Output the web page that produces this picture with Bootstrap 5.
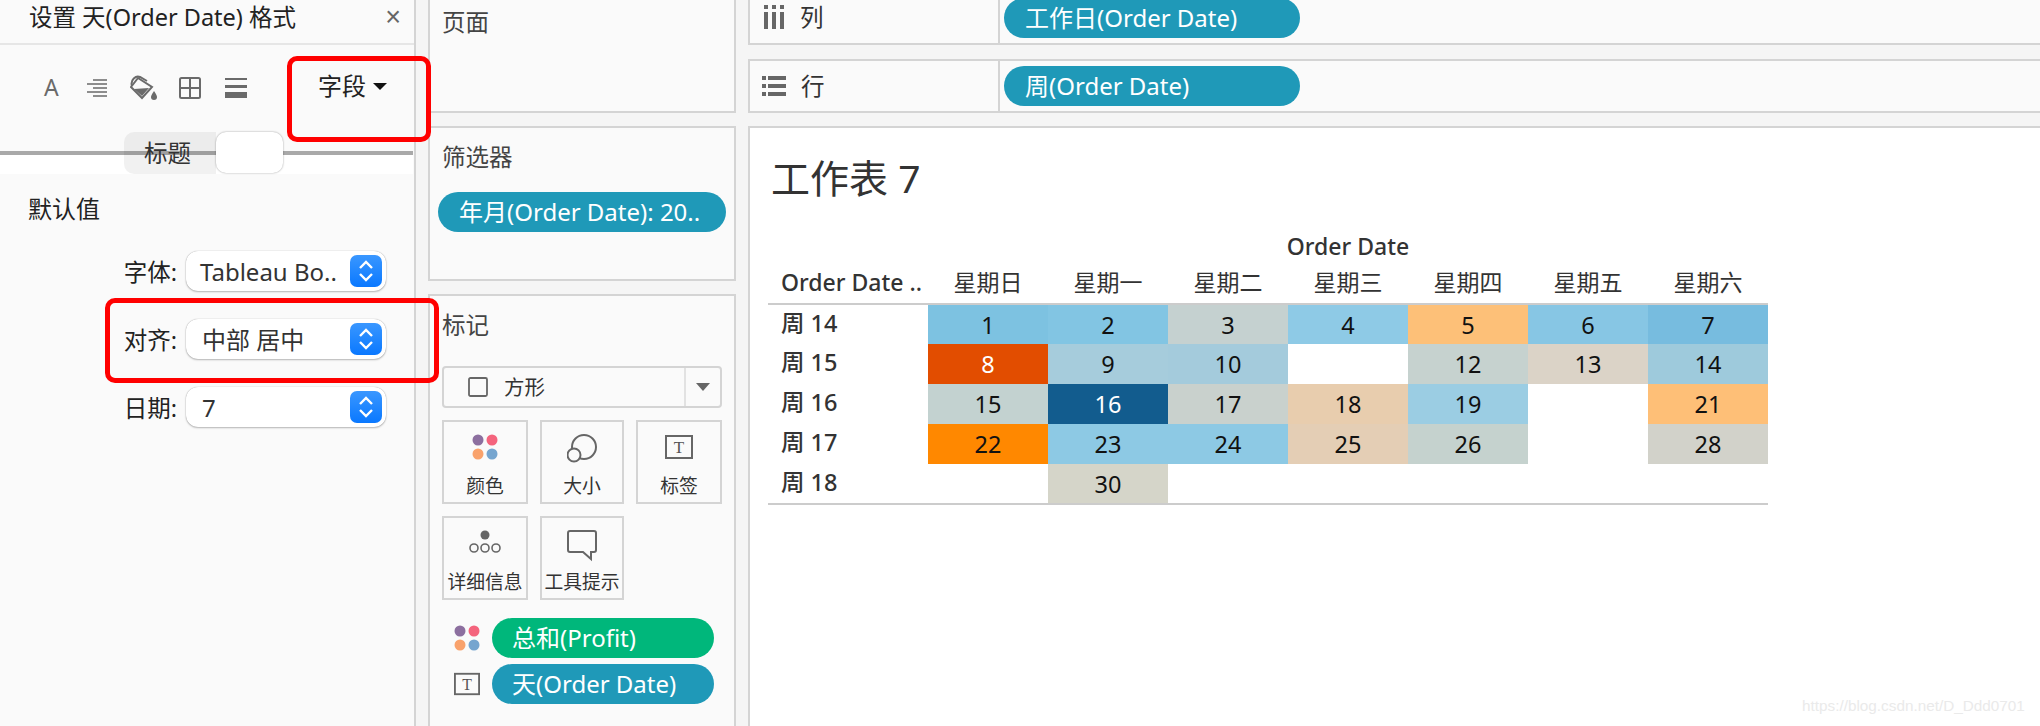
<!DOCTYPE html>
<html lang="zh">
<head>
<meta charset="utf-8">
<title>工作表 7</title>
<link rel="stylesheet" href="https://cdn.jsdelivr.net/npm/bootstrap@5.3.0/dist/css/bootstrap.min.css">
<style>
html,body{height:726px;overflow:hidden}
body{background:#f5f5f5;color:#333;font-family:"Noto Sans","Noto Sans CJK SC",sans-serif;font-size:23px;line-height:1.2}
.stage{width:2040px;height:726px;position:relative;overflow:hidden}
.fmt-panel{width:416px;height:726px;background:#fafafa;border-right:2px solid #d4d4d4;flex:none}
.fmt-head{height:45px;border-bottom:2px solid #e6e6e6;padding:0 13px 9px 29px;font-size:23.5px;color:#222}
.fmt-head .closer{font-size:27px;color:#666;line-height:1;font-family:"Liberation Sans",sans-serif}
.fmt-tools{height:87px;padding-left:44px;padding-bottom:2px}
.tool{display:block;color:#6a6a6a;flex:none}
.tool-a{width:14px;font-size:23px;margin-right:29px;line-height:1}
.tool-field{font-size:24px;color:#222;margin-left:71px;margin-top:-2px}
.caret-down{width:0;height:0;border-left:7px solid transparent;border-right:7px solid transparent;border-top:7px solid #111;margin-left:7px}
.seg-band{height:42px;padding-left:124px;background:linear-gradient(to bottom,#fafafa 19px,#a9a9a9 19px,#a9a9a9 23px,#fff 23px);margin-right:1px}
.seg-left{width:92px;height:42px;background:rgba(0,0,0,.055);border-radius:10px 0 0 10px;font-size:23.5px;color:#333;padding-left:20px}
.seg-knob{width:67px;height:41px;background:#fff;border-radius:10px;box-shadow:0 0 2px rgba(0,0,0,.4)}
.fmt-sub{font-size:24px;color:#222;padding:21px 0 0 28px;height:77px}
.fmt-row{height:68px}
.fmt-label{width:178px;height:40px;font-size:23.5px;color:#222;padding:2px 1px 0 0;flex:none}
.pick{width:200px;height:40px;margin-left:8px;background:#fff;border-radius:12px;box-shadow:0 0 1px rgba(0,0,0,.35),0 1px 2px rgba(0,0,0,.25);padding:0 4px 0 14px;font-size:24px;color:#333}
.pick>span:first-child{margin-top:3px}
.pick.tight{padding-left:16px}
.stepper{width:32px;height:32px;border-radius:7px;background:linear-gradient(#3a97ff,#0a78ff);flex:none}
.mid-col{width:308px;margin-left:12px;flex:none}
.shelf{background:#fafafa;border:2px solid #d4d4d4}
.shelf-pages{height:115px;margin-top:-2px;margin-bottom:13px;padding:8px 0 0 12px}
.shelf-filter{height:155px;margin-bottom:13px;padding:15px 8px 0 8px}
.shelf-marks{height:434px;padding:15px 12px 0 12px}
.shelf-title{font-size:23.5px;color:#444}
.shelf-filter .shelf-title{margin-left:4px}
.pillish{height:40px;border-radius:20px;color:#fff;font-size:24px;padding-left:20px;background:#1f99b8;white-space:nowrap;overflow:hidden}
.pill-green{background:#00b77b}
.filter-pill{margin-top:21px;padding-left:21px}
.mark-type{height:42px;margin-top:27px;border:2px solid #d4d4d4;border-radius:4px;background:#fafafa;font-size:20.5px;color:#333}
.mark-type .mt-main{padding-left:24px;border-right:2px solid #e2e2e2;height:100%;width:242px}
.mark-type .mt-arrow{flex:1}
.tri{width:0;height:0;border-left:7px solid transparent;border-right:7px solid transparent;border-top:8px solid #666}
.mark-grid{display:grid;grid-template-columns:86px 84px 86px;grid-auto-rows:84px;gap:12px;margin-top:12px}
.mark-cell{border:2px solid #d4d4d4;background:#fafafa;font-size:18.8px;color:#333;padding-top:12px;white-space:nowrap}
.mark-cell svg{display:block;height:34px;margin-bottom:7px}
.legend-row{margin-top:6px;padding-left:12px;width:272px}
.legend-row .pillish{width:222px;margin-left:12px}
.legend-row svg{flex:none;width:26px;height:26px}
.legend-first{margin-top:18px}
.right-col{flex:1 1 0;min-width:0;margin-left:12px}
.bar{background:#fafafa;border:2px solid #d4d4d4;border-right:0}
.bar-cols{height:47px;margin-top:-2px;margin-bottom:14px}
.bar-rows{height:54px;margin-bottom:13px}
.bar-name{width:250px;border-right:2px solid #d4d4d4;padding-left:12px;height:100%;font-size:23.5px;color:#333;flex:none}
.bar-cols .bar-name{padding-bottom:9px;padding-left:14px}
.bar-name svg{margin-right:15px;flex:none}
.bar .pillish{width:296px;margin-left:4px;padding-left:21px}
.bar-cols .pillish{align-self:flex-start;margin-top:-2px}
.view{height:602px;background:#fff;border:2px solid #d4d4d4;border-right:0;border-bottom:0;padding:0 0 0 18px}
.view-title{font-size:39px;color:#333;padding:25px 0 0 3px;height:104px;line-height:50px}
.table.cal{width:1000px;table-layout:fixed;margin:0;font-size:23px;--bs-table-bg:transparent}
.c-lead{width:160px}
.table.cal>*>tr>*{padding:0;text-align:center;vertical-align:middle;border:0;color:#333;font-weight:400;line-height:1}
.table.cal>thead>tr.r-top>th{height:28px;font-weight:500}
.table.cal>thead>tr.r-day>th{height:44px;border-bottom:2px solid #ccc;padding-top:2px}
.table.cal>thead>tr.r-day>th.corner{text-align:left;padding-left:13px;font-weight:500}
.table.cal>tbody>tr{height:40px}
.table.cal>tbody>tr>td{font-size:23.5px;color:#111;padding-top:2px}
.table.cal>tbody>tr>td.wk{text-align:left;padding:0 0 2px 13px;font-size:23.5px;color:#333;font-weight:500}
.table.cal>tbody>tr>td.inv{color:#fff}
.table.cal>tbody>tr:last-child>td{border-bottom:2px solid #ccc}
.note-box{position:absolute;border:5px solid #f00;border-radius:10px}
.note-a{left:287px;top:56px;width:144px;height:86px}
.note-b{left:105px;top:298px;width:334px;height:85px}
.stamp{position:absolute;left:1802px;top:697px;font-family:"Liberation Sans",sans-serif;font-size:15.3px;color:#eaeaea}
</style>
</head>
<body>
<div class="stage d-flex">
  <aside class="fmt-panel">
    <div class="fmt-head d-flex align-items-center justify-content-between"><span>设置 天(Order Date) 格式</span><span class="closer">×</span></div>
    <div class="fmt-tools d-flex align-items-center">
      <span class="tool tool-a">A</span>
      <svg class="tool me-4" width="20" height="18" viewBox="0 0 20 18"><path d="M6 1h14M0 5h20M6 9h14M0 13h20M6 17h14" stroke="#6a6a6a" stroke-width="1.6" fill="none"/></svg>
      <svg class="tool" style="margin-left:-1px;margin-right:21px" width="28" height="26" viewBox="0 0 28 26"><path d="M8 3 L22 12 L12 23 L1 12 Z" fill="none" stroke="#6a6a6a" stroke-width="2"/><path d="M4 14 L19 13 L12 21 Z" fill="#6a6a6a"/><path d="M2 11C0 5 6 0 10 2L17 6" fill="none" stroke="#6a6a6a" stroke-width="2"/><path d="M24 16c2 3 3 5 3 6a3 3 0 0 1-6 0c0-1 1-3 3-6z" fill="#6a6a6a"/></svg>
      <svg class="tool" style="margin-right:24px" width="22" height="22" viewBox="0 0 22 22"><rect x="1" y="1" width="20" height="20" rx="1.5" fill="none" stroke="#6a6a6a" stroke-width="2"/><path d="M11 1v20M1 11h20" stroke="#6a6a6a" stroke-width="2"/></svg>
      <svg class="tool" width="22" height="20" viewBox="0 0 22 20"><path d="M0 1h22" stroke="#6a6a6a" stroke-width="2"/><path d="M0 8.5h22" stroke="#6a6a6a" stroke-width="3"/><path d="M0 17h22" stroke="#6a6a6a" stroke-width="6"/></svg>
      <span class="tool-field d-flex align-items-center">字段<span class="caret-down"></span></span>
    </div>
    <div class="seg-band d-flex">
      <div class="seg-left d-flex align-items-center">标题</div>
      <div class="seg-knob"></div>
    </div>
    <div class="fmt-sub">默认值</div>
    <div class="fmt-row d-flex align-items-start">
      <span class="fmt-label d-flex align-items-center justify-content-end">字体:</span>
      <div class="pick d-flex align-items-center justify-content-between"><span>Tableau Bo..</span><span class="stepper d-flex align-items-center justify-content-center"><svg width="18" height="24" viewBox="0 0 18 24"><path d="M3 9l6-6 6 6M3 15l6 6 6-6" fill="none" stroke="#fff" stroke-width="2.4"/></svg></span></div>
    </div>
    <div class="fmt-row d-flex align-items-start">
      <span class="fmt-label d-flex align-items-center justify-content-end">对齐:</span>
      <div class="pick tight d-flex align-items-center justify-content-between"><span>中部 居中</span><span class="stepper d-flex align-items-center justify-content-center"><svg width="18" height="24" viewBox="0 0 18 24"><path d="M3 9l6-6 6 6M3 15l6 6 6-6" fill="none" stroke="#fff" stroke-width="2.4"/></svg></span></div>
    </div>
    <div class="fmt-row d-flex align-items-start">
      <span class="fmt-label d-flex align-items-center justify-content-end">日期:</span>
      <div class="pick tight d-flex align-items-center justify-content-between"><span>7</span><span class="stepper d-flex align-items-center justify-content-center"><svg width="18" height="24" viewBox="0 0 18 24"><path d="M3 9l6-6 6 6M3 15l6 6 6-6" fill="none" stroke="#fff" stroke-width="2.4"/></svg></span></div>
    </div>
  </aside>

  <section class="mid-col">
    <div class="shelf shelf-pages"><div class="shelf-title">页面</div></div>
    <div class="shelf shelf-filter">
      <div class="shelf-title">筛选器</div>
      <div class="pillish filter-pill d-flex align-items-center">年月(Order Date): 20..</div>
    </div>
    <div class="shelf shelf-marks">
      <div class="shelf-title">标记</div>
      <div class="mark-type d-flex align-items-center">
        <div class="mt-main d-flex align-items-center"><svg class="me-3" width="20" height="20" viewBox="0 0 20 20"><rect x="1" y="1" width="18" height="18" rx="1.5" fill="none" stroke="#666" stroke-width="1.8"/></svg>方形</div>
        <div class="mt-arrow d-flex justify-content-center"><span class="tri"></span></div>
      </div>
      <div class="mark-grid">
        <div class="mark-cell text-center"><svg class="mx-auto" width="26" height="34" viewBox="0 0 26 34"><circle cx="6" cy="6" r="5.5" fill="#8c6f9f"/><circle cx="20" cy="6" r="5.5" fill="#f4647d"/><circle cx="6" cy="20" r="5.5" fill="#f9a26c"/><circle cx="20" cy="20" r="5.5" fill="#76a5cf"/></svg>颜色</div>
        <div class="mark-cell text-center"><svg class="mx-auto" width="30" height="34" viewBox="0 0 30 34"><circle cx="17" cy="13" r="12" fill="none" stroke="#666" stroke-width="2"/><circle cx="7" cy="21" r="6.5" fill="#fafafa" stroke="#666" stroke-width="2"/></svg>大小</div>
        <div class="mark-cell text-center"><svg class="mx-auto" width="28" height="34" viewBox="0 0 28 34"><rect x="1" y="2" width="26" height="22" fill="none" stroke="#666" stroke-width="2"/><text x="14" y="19" text-anchor="middle" font-family="Liberation Serif,serif" font-size="17" fill="#555">T</text></svg>标签</div>
        <div class="mark-cell text-center"><svg class="mx-auto" width="32" height="34" viewBox="0 0 32 34"><circle cx="16" cy="5" r="4.5" fill="#666"/><circle cx="5" cy="18" r="4" fill="none" stroke="#666" stroke-width="1.6"/><circle cx="16" cy="18" r="4" fill="none" stroke="#666" stroke-width="1.6"/><circle cx="27" cy="18" r="4" fill="none" stroke="#666" stroke-width="1.6"/></svg>详细信息</div>
        <div class="mark-cell text-center"><svg class="mx-auto" width="30" height="34" viewBox="0 0 30 34"><path d="M3 1h24a2 2 0 0 1 2 2v17a2 2 0 0 1-2 2h-3v7l-8-7H3a2 2 0 0 1-2-2V3a2 2 0 0 1 2-2z" fill="none" stroke="#666" stroke-width="2"/></svg>工具提示</div>
      </div>
      <div class="legend-row legend-first d-flex align-items-center">
        <svg viewBox="0 0 26 26"><circle cx="6" cy="6" r="5.5" fill="#8c6f9f"/><circle cx="20" cy="6" r="5.5" fill="#f4647d"/><circle cx="6" cy="20" r="5.5" fill="#f9a26c"/><circle cx="20" cy="20" r="5.5" fill="#76a5cf"/></svg>
        <div class="pillish pill-green d-flex align-items-center">总和(Profit)</div>
      </div>
      <div class="legend-row d-flex align-items-center">
        <svg viewBox="0 0 28 26"><rect x="1" y="2" width="26" height="22" fill="none" stroke="#666" stroke-width="2"/><text x="14" y="19" text-anchor="middle" font-family="Liberation Serif,serif" font-size="17" fill="#555">T</text></svg>
        <div class="pillish d-flex align-items-center">天(Order Date)</div>
      </div>
    </div>
  </section>

  <main class="right-col">
    <div class="bar bar-cols d-flex align-items-center">
      <div class="bar-name d-flex align-items-center"><svg width="21" height="24" viewBox="0 0 21 24"><path d="M0 0h4v4H0zM8 0h4v4H8zM16 0h4v4h-4zM0 7h4v17H0zM8 7h4v17H8zM16 7h4v17h-4z" fill="#666"/></svg>列</div>
      <div class="pillish d-flex align-items-center">工作日(Order Date)</div>
    </div>
    <div class="bar bar-rows d-flex align-items-center">
      <div class="bar-name d-flex align-items-center"><svg width="24" height="20" viewBox="0 0 24 20"><path d="M0 0h4v4H0zM0 8h4v4H0zM0 16h4v4H0zM6 0h18v4H6zM6 8h18v4H6zM6 16h18v4H6z" fill="#666"/></svg>行</div>
      <div class="pillish d-flex align-items-center">周(Order Date)</div>
    </div>
    <div class="view">
      <div class="view-title">工作表 7</div>
      <table class="table cal">
        <colgroup><col class="c-lead"><col><col><col><col><col><col><col></colgroup>
        <thead>
          <tr class="r-top"><th></th><th colspan="7">Order Date</th></tr>
          <tr class="r-day"><th class="corner">Order Date ..</th><th>星期日</th><th>星期一</th><th>星期二</th><th>星期三</th><th>星期四</th><th>星期五</th><th>星期六</th></tr>
        </thead>
        <tbody>
          <tr><td class="wk">周 14</td><td style="background-color:#7dc2e1">1</td><td style="background-color:#82c5e3">2</td><td style="background-color:#c5d1d0">3</td><td style="background-color:#8ecae6">4</td><td style="background-color:#fdc078">5</td><td style="background-color:#87c6e4">6</td><td style="background-color:#77bcdf">7</td></tr>
          <tr><td class="wk">周 15</td><td class="inv" style="background-color:#e24d00">8</td><td style="background-color:#a6ccdc">9</td><td style="background-color:#a4cbdc">10</td><td></td><td style="background-color:#c6d2cf">12</td><td style="background-color:#dbd3c7">13</td><td style="background-color:#9ecadc">14</td></tr>
          <tr><td class="wk">周 16</td><td style="background-color:#c3d2d0">15</td><td class="inv" style="background-color:#125c8e">16</td><td style="background-color:#c9d1cd">17</td><td style="background-color:#e8cdae">18</td><td style="background-color:#9bcde3">19</td><td></td><td style="background-color:#febf77">21</td></tr>
          <tr><td class="wk">周 17</td><td style="background-color:#ff8800">22</td><td style="background-color:#8dc9e4">23</td><td style="background-color:#8dc9e4">24</td><td style="background-color:#e4ceb5">25</td><td style="background-color:#c5d2ce">26</td><td></td><td style="background-color:#d2d2ca">28</td></tr>
          <tr><td class="wk">周 18</td><td></td><td style="background-color:#d5d5c9">30</td><td></td><td></td><td></td><td></td><td></td></tr>
        </tbody>
      </table>
    </div>
  </main>

  <div class="note-box note-a"></div>
  <div class="note-box note-b"></div>
  <div class="stamp">https://blog.csdn.net/D_Ddd0701</div>
</div>
<script src="https://cdn.jsdelivr.net/npm/bootstrap@5.3.0/dist/js/bootstrap.bundle.min.js"></script>
</body>
</html>
